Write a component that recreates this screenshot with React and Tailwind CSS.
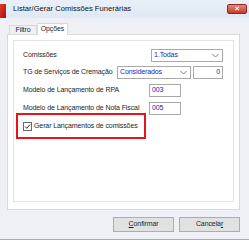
import React from 'react';

const font = { fontFamily: '"Liberation Sans", Arial, sans-serif' };

const Select = ({ value, className }) => (
  <div className={`flex items-center justify-between border border-[#a9a9a9] bg-white pl-[2px] pr-[3px] ${className}`}>
    <span className="text-[#2323b8]">{value}</span>
    <svg width="7" height="5" viewBox="0 0 7 5" className="text-[#7a7a7a]">
      <path d="M0.5 1 L3.5 4 L6.5 1" fill="none" stroke="currentColor" strokeWidth="1" />
    </svg>
  </div>
);

const Input = ({ value, className }) => (
  <div className={`flex items-center border border-[#a9a9a9] bg-white px-[2px] text-[#2323b8] ${className}`}>{value}</div>
);

const App = () => {
  return (
    <div className="flex h-[240px] w-[249px] flex-col overflow-hidden whitespace-nowrap bg-[#eff0f6] text-[7px] tracking-[-0.1px] text-[#1e1e1e]" style={font}>
      {/* title bar */}
      <div className="flex h-[18px] items-center bg-gradient-to-b from-[#e9f0f8] to-[#dfe8f3]">
        <div className="mt-[4px] h-[14px] w-[6px] bg-gradient-to-br from-[#e63a2e] to-[#a4100c]" />
        <span className="ml-[7px] text-[7.6px] tracking-normal text-[#111]">Listar/Gerar Comissões Funerárias</span>
        <div className="ml-auto mr-[2px] mt-[-1px] flex h-[10px] w-[20px] items-center justify-center rounded-[2px] border border-[#8c2a22] bg-gradient-to-b from-[#e08a7e] to-[#c2382b] text-[8px] font-bold leading-none text-white">
          ×
        </div>
      </div>

      {/* tabs */}
      <div className="ml-[7px] mt-[5px] flex h-[11px] items-end">
        <div className="ml-[2px] flex h-[9px] w-[28px] items-center justify-center border border-b-0 border-[#d9d9d9] bg-[#f0f0f0]">
          Filtro
        </div>
        <div className="relative z-10 mb-[-1px] flex h-[12px] w-[31px] items-center justify-center border border-b-0 border-[#d9d9d9] bg-white">
          Opções
        </div>
      </div>

      {/* tab panel */}
      <div className="ml-[7px] flex h-[176px] w-[233px] flex-col border border-[#d9d9d9] bg-white px-[5px] pb-[7px] pt-[5px]">
        <div className="flex flex-1 flex-col border border-[#e3e3e3] pl-[9px] pt-[8px]">
          <div className="flex h-[13px] items-center">
            <span className="w-[128px]">Comissões</span>
            <Select value="1.Todas" className="h-[13px] w-[72px]" />
          </div>
          <div className="mt-[4px] flex h-[13px] items-center">
            <span className="w-[94px]">TG de Serviços de Cremação</span>
            <Select value="Considerados" className="h-[13px] w-[74px]" />
            <Input value="0" className="ml-[2px] h-[13px] w-[30px] justify-end text-[#1a1a7a]" />
          </div>
          <div className="mt-[5px] flex h-[13px] items-center">
            <span className="w-[126px]">Modelo de Lançamento de RPA</span>
            <Input value="003" className="h-[13px] w-[32px]" />
          </div>
          <div className="mt-[5px] flex h-[13px] items-center">
            <span className="w-[126px]">Modelo de Lançamento de Nota Fiscal</span>
            <Input value="005" className="h-[13px] w-[32px]" />
          </div>
          <div className="ml-[-7px] mt-[-2px] flex h-[26px] w-[130px] items-center border-2 border-[#e8141c] pl-[5px]">
            <div className="flex h-[9px] w-[9px] items-center justify-center border border-[#6a6a6a] bg-white">
              <svg width="7" height="7" viewBox="0 0 7 7">
                <path d="M1 3.5 L2.8 5.3 L6 1.5" fill="none" stroke="#333" strokeWidth="1" />
              </svg>
            </div>
            <span className="ml-[2px]">Gerar Lançamentos de comissões</span>
          </div>
        </div>
      </div>

      {/* buttons */}
      <div className="mt-[7px] flex justify-end gap-[5px] pr-[9px]">
        <button className="flex h-[15px] w-[61px] items-center justify-center border border-[#adadad] bg-[#e1e1e1] text-[7px]">
          <span className="underline">C</span>onfirmar
        </button>
        <button className="flex h-[15px] w-[61px] items-center justify-center border border-[#adadad] bg-[#e1e1e1] text-[7px]">
          Cancela<span className="underline">r</span>
        </button>
      </div>

      <div className="mt-auto h-[1px] bg-[#6cc3e0]" />
    </div>
  );
};

export default App;
